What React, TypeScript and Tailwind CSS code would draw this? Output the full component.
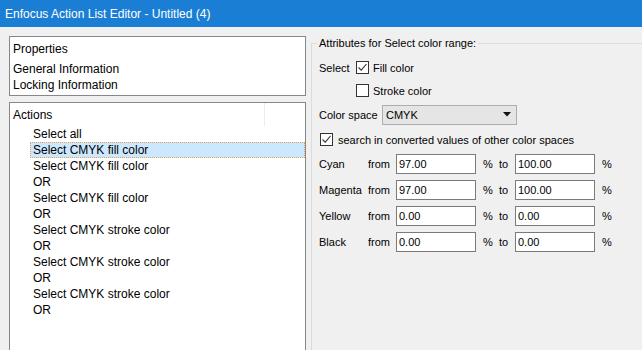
import React from "react";

const actions = [
  "Select all",
  "Select CMYK fill color",
  "Select CMYK fill color",
  "OR",
  "Select CMYK fill color",
  "OR",
  "Select CMYK stroke color",
  "OR",
  "Select CMYK stroke color",
  "OR",
  "Select CMYK stroke color",
  "OR",
];

const ranges = [
  { name: "Cyan", from: "97.00", to: "100.00" },
  { name: "Magenta", from: "97.00", to: "100.00" },
  { name: "Yellow", from: "0.00", to: "0.00" },
  { name: "Black", from: "0.00", to: "0.00" },
];

const Check = ({ checked }: { checked: boolean }) => (
  <span className="w-[13px] h-[13px] border border-[#333333] bg-white flex items-center justify-center shrink-0">
    {checked && (
      <svg width="11" height="11" viewBox="0 0 11 11">
        <path d="M1.5 5.5 L4.2 8.2 L9.5 2" fill="none" stroke="#333333" strokeWidth="1.1" />
      </svg>
    )}
  </span>
);

const App = () => {
  return (
    <div className="w-[642px] h-[350px] overflow-hidden bg-[#f0f0f0] text-black text-[12px] leading-[16px] font-['Liberation_Sans',Arial,sans-serif]">
      {/* title bar */}
      <div className="h-[27px] bg-[#1a7fd4] text-white text-[12px] flex items-center pl-[5px]">
        Enfocus Action List Editor - Untitled (4)
      </div>

      <div className="flex h-[323px]">
        {/* left column */}
        <div className="w-[306px] shrink-0 pl-[9px] pt-[9px] flex flex-col gap-[6px]">
          <div className="h-[60px] w-[297px] border border-[#828790] bg-white pl-[3px] pt-[4px]">
            <div>Properties</div>
            <div className="mt-[4px]">General Information</div>
            <div>Locking Information</div>
          </div>

          <div className="flex-1 w-[297px] border border-b-0 border-[#828790] bg-white">
            <div className="h-[23px] flex">
              <div className="w-[255px] pl-[3px] flex items-center border-r border-[#ececec]">Actions</div>
            </div>
            {actions.map((item, i) =>
              i === 1 ? (
                <div
                  key={i}
                  className="h-[16px] ml-[20px] pl-[2px] bg-[#cce8ff] border border-dotted border-[#f0a040] flex items-center"
                >
                  {item}
                </div>
              ) : (
                <div key={i} className="h-[16px] pl-[23px] flex items-center">
                  {item}
                </div>
              )
            )}
          </div>
        </div>

        {/* right side */}
        <div className="flex-1 pl-[5px] pt-[8px] text-[11px]">
          <fieldset className="w-[400px] h-[340px] border border-[#dcdcdc]">
            <legend className="ml-[5px] px-[2px]">Attributes for Select color range:</legend>

            <div className="pl-[7px] pt-[5px]">
              <div className="h-[23px] flex items-center">
                <span className="w-[37px]">Select</span>
                <Check checked />
                <span className="ml-[4px]">Fill color</span>
              </div>
              <div className="h-[23px] flex items-center">
                <span className="w-[37px]" />
                <Check checked={false} />
                <span className="ml-[4px]">Stroke color</span>
              </div>
              <div className="h-[25px] flex items-center">
                <span className="w-[63px]">Color space</span>
                <div className="w-[135px] h-[20px] bg-[#e5e5e5] border border-[#adadad] flex items-center justify-between pl-[3px] pr-[5px]">
                  <span>CMYK</span>
                  <svg width="8" height="5" viewBox="0 0 8 5">
                    <path d="M0 0 L8 0 L4 4.5 Z" fill="#111" />
                  </svg>
                </div>
              </div>
              <div className="h-[25px] flex items-center pl-[1px]">
                <Check checked />
                <span className="ml-[5px]">search in converted values of other color spaces</span>
              </div>

              <div className="mt-[2px] flex flex-col gap-[6px]">
                {ranges.map((r) => (
                  <div key={r.name} className="h-[20px] flex items-center">
                    <span className="w-[49px]">{r.name}</span>
                    <span className="w-[28px]">from</span>
                    <div className="w-[80px] h-[20px] border border-[#7a7a7a] bg-white pl-[2px] flex items-center">
                      {r.from}
                    </div>
                    <span className="w-[16px] ml-[7px]">%</span>
                    <span className="w-[16px]">to</span>
                    <div className="w-[80px] h-[20px] border border-[#7a7a7a] bg-white pl-[2px] flex items-center">
                      {r.to}
                    </div>
                    <span className="ml-[7px]">%</span>
                  </div>
                ))}
              </div>
            </div>
          </fieldset>
        </div>
      </div>
    </div>
  );
};

export default App;
